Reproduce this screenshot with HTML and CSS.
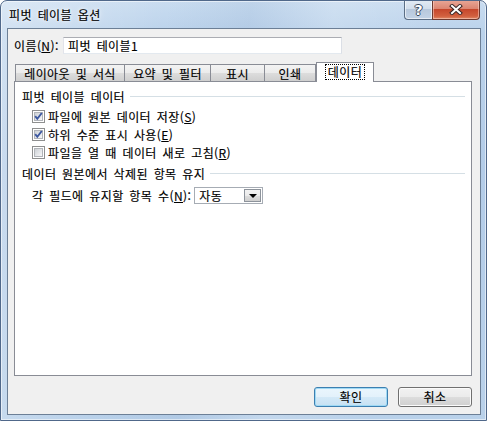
FILE: index.html
```html
<!DOCTYPE html>
<html lang="ko">
<head>
<meta charset="utf-8">
<title>피벗 테이블 옵션</title>
<link rel="stylesheet" href="styles.css">
</head>
<body>
<div class="window">
  <div class="titlebar">
    <span class="title">피벗 테이블 옵션</span>
    <div class="caps">
      <div class="cap help">?</div>
      <div class="cap close">
        <svg width="14" height="11" viewBox="0 0 14 11">
          <path d="M3 2 L11 9 M11 2 L3 9" stroke="#3a2626" stroke-width="4" stroke-linecap="square" fill="none"/>
          <path d="M3 2 L11 9 M11 2 L3 9" stroke="#ffffff" stroke-width="2" stroke-linecap="square" fill="none"/>
        </svg>
      </div>
    </div>
  </div>
  <div class="client">
    <div class="name-row">
      <span class="name-label">이름(<u>N</u>):</span>
      <div class="name-input">피벗 테이블1</div>
    </div>
    <div class="tabs">
      <div class="tab t1">레이아웃 및 서식</div>
      <div class="tab t2">요약 및 필터</div>
      <div class="tab t3">표시</div>
      <div class="tab t4">인쇄</div>
      <div class="tab active"><span class="focus">데이터</span></div>
    </div>
    <div class="panel">
      <div class="section">피벗 테이블 데이터</div>
      <div class="check first">
        <span class="cb"><span class="cb-in"></span><svg class="tick" width="11" height="11" viewBox="0 0 11 11"><path d="M2.2 5.2 L4.3 7.8 L8.8 2" stroke="#3d58a0" stroke-width="1.9" fill="none"/></svg></span>
        <span>파일에 원본 데이터 저장(<u>S</u>)</span>
      </div>
      <div class="check">
        <span class="cb"><span class="cb-in"></span><svg class="tick" width="11" height="11" viewBox="0 0 11 11"><path d="M2.2 5.2 L4.3 7.8 L8.8 2" stroke="#3d58a0" stroke-width="1.9" fill="none"/></svg></span>
        <span>하위 수준 표시 사용(<u>E</u>)</span>
      </div>
      <div class="check">
        <span class="cb"><span class="cb-in"></span></span>
        <span>파일을 열 때 데이터 새로 고침(<u>R</u>)</span>
      </div>
      <div class="section second">데이터 원본에서 삭제된 항목 유지</div>
      <div class="field-row">
        <span class="field-label">각 필드에 유지할 항목 수(<u>N</u>):</span>
        <div class="combo">
          <span class="combo-text">자동</span>
          <span class="combo-btn"><span class="arrow"></span></span>
        </div>
      </div>
    </div>
    <div class="buttons">
      <div class="btn default">확인</div>
      <div class="btn">취소</div>
    </div>
  </div>
</div>
</body>
</html>
```

FILE: styles.css
```css
html, body {
  margin: 0;
  padding: 0;
  background: #ffffff;
}

body {
  font-family: "Noto Sans CJK KR", "Noto Sans", sans-serif;
  font-size: 12px;
  color: #000;
  word-spacing: 2px;
  letter-spacing: 0.4px;
  -webkit-text-stroke: 0.15px #000;
}

u {
  text-decoration: underline;
  text-underline-offset: 1px;
}

.window {
  width: 487px;
  height: 421px;
  box-sizing: border-box;
  border: 1px solid #50688a;
  border-radius: 7px 7px 0 0;
  background:
    linear-gradient(100deg, rgba(255,255,255,0.35) 0%, rgba(255,255,255,0) 30%, rgba(120,150,190,0.12) 45%, rgba(255,255,255,0.15) 60%, rgba(255,255,255,0) 80%),
    linear-gradient(180deg, #c9dcf0 0%, #bad2eb 8%, #b3cce8 40%, #b9d1ea 100%);
  box-shadow: inset 0 0 0 1px rgba(255,255,255,0.55);
  display: flex;
  flex-direction: column;
  overflow: hidden;
}

.titlebar {
  height: 27px;
  flex: none;
  display: flex;
  justify-content: space-between;
  align-items: flex-start;
  padding-left: 8px;
}

.title {
  padding-top: 6px;
  line-height: 16px;
  font-size: 12px;
  text-shadow: 0 0 6px rgba(255,255,255,0.9), 0 0 3px rgba(255,255,255,0.9);
}

.caps {
  display: flex;
  margin-top: -1px;
  margin-right: 6px;
}

.cap {
  height: 20px;
  box-sizing: border-box;
  border: 1px solid #5b6e85;
  border-top: none;
  display: flex;
  align-items: center;
  justify-content: center;
}

.help {
  width: 28px;
  border-radius: 0 0 0 4px;
  border-right: none;
  background: linear-gradient(180deg, #e3ebf4 0%, #d2deec 45%, #b7c8dc 50%, #c3d3e6 100%);
  box-shadow: inset 0 0 0 1px rgba(255,255,255,0.6);
  color: #fff;
  font-family: "DejaVu Sans", sans-serif;
  font-weight: bold;
  font-size: 14px;
  line-height: 14px;
  letter-spacing: 0;
  -webkit-text-stroke: 0;
  text-shadow: -1px 0 #3a4a5e, 1px 0 #3a4a5e, 0 -1px #3a4a5e, 0 1px #3a4a5e;
}

.close {
  width: 48px;
  border-radius: 0 0 4px 0;
  border-color: #6e3a30;
  background: linear-gradient(180deg, #e9a898 0%, #dc8672 45%, #c6472c 50%, #d2603f 85%, #e08a68 100%);
  box-shadow: inset 0 0 0 1px rgba(255,220,210,0.5);
}

.client {
  flex: 1;
  margin: 0 5px 5px 6px;
  border: 1px solid #6c7f96;
  background: #f0f0f0;
  display: flex;
  flex-direction: column;
  padding: 8px 8px 0 6px;
}

.name-row {
  display: flex;
  align-items: center;
  height: 17px;
}

.name-label {
  width: 49px;
  flex: none;
}

.name-input {
  width: 279px;
  height: 17px;
  box-sizing: border-box;
  border: 1px solid #abadb3;
  border-color: #abadb3 #dbdfe6 #e3e9ef #e2e3ea;
  background: #fff;
  padding-left: 4px;
  line-height: 15px;
}

.tabs {
  margin-top: 8px;
  height: 19px;
  display: flex;
  align-items: flex-end;
  padding-left: 1px;
}

.tab {
  height: 17px;
  box-sizing: border-box;
  border: 1px solid #898c95;
  border-bottom: none;
  border-right: none;
  background: linear-gradient(180deg, #f3f3f3 0%, #ebebeb 50%, #dddddd 50%, #cfcfcf 100%);
  display: flex;
  align-items: center;
  justify-content: center;
  line-height: 15px;
}

.t1 { width: 109px; }
.t2 { width: 86px; }
.t3 { width: 54px; }
.t4 { width: 52px; border-right: 1px solid #898c95; }

.tab.active {
  width: 58px;
  height: 20px;
  margin-bottom: -1px;
  background: #fff;
  border-right: 1px solid #898c95;
  position: relative;
  z-index: 1;
  align-items: flex-start;
  padding-top: 2px;
}

.focus {
  outline: 1px dotted #000;
  outline-offset: 0;
  padding: 0 2px;
  line-height: 14px;
}

.panel {
  width: 458px;
  height: 295px;
  box-sizing: border-box;
  border: 1px solid #898c95;
  background: #fff;
  display: flex;
  flex-direction: column;
  padding: 6px 6px 0 7px;
}

.section {
  display: flex;
  align-items: center;
  height: 16px;
  gap: 5px;
}

.section::after {
  content: "";
  flex: 1;
  height: 1px;
  background: #d5dfe5;
}

.section.second {
  margin-top: 4px;
}

.check {
  display: flex;
  align-items: center;
  height: 18px;
  padding-left: 10px;
  gap: 3px;
}

.check.first {
  margin-top: 3px;
}

.cb {
  width: 13px;
  height: 13px;
  box-sizing: border-box;
  border: 1px solid #8e8f8f;
  background: #fff;
  display: grid;
  flex: none;
}

.cb-in {
  grid-area: 1 / 1;
  margin: 1px;
  box-sizing: border-box;
  border: 1px solid #b1b4b9;
  background: linear-gradient(135deg, #cdd1d6 0%, #e6e8eb 60%, #f8f8f8 100%);
}

.tick {
  grid-area: 1 / 1;
}

.field-row {
  margin-top: 6px;
  display: flex;
  align-items: center;
  height: 17px;
  padding-left: 10px;
  gap: 3px;
}

.field-label {
  min-width: 159px;
}

.combo {
  width: 69px;
  height: 17px;
  box-sizing: border-box;
  border: 1px solid #a6acb4;
  background: #fff;
  display: flex;
  align-items: center;
  justify-content: space-between;
  padding: 1px;
}

.combo-text {
  padding-left: 3px;
  line-height: 14px;
}

.combo-btn {
  width: 17px;
  height: 13px;
  box-sizing: border-box;
  border: 1px solid #8d939b;
  background: linear-gradient(180deg, #f2f2f2 0%, #ebebeb 50%, #dddddd 50%, #cfcfcf 100%);
  display: flex;
  align-items: center;
  justify-content: center;
}

.arrow {
  width: 0;
  height: 0;
  border-left: 4px solid transparent;
  border-right: 4px solid transparent;
  border-top: 4px solid #000;
  margin-top: 1px;
}

.buttons {
  margin-top: 11px;
  display: flex;
  justify-content: flex-end;
  gap: 10px;
}

.btn {
  width: 74px;
  height: 20px;
  box-sizing: border-box;
  border: 1px solid #707070;
  border-radius: 3px;
  background: linear-gradient(180deg, #f2f2f2 0%, #ebebeb 50%, #dddddd 50%, #cfcfcf 100%);
  box-shadow: inset 0 0 0 1px #fbfbfb;
  display: flex;
  align-items: center;
  justify-content: center;
  line-height: 16px;
}

.btn.default {
  border-color: #3c7fb1;
  box-shadow: inset 0 0 0 1px #9fd9f4;
  background: linear-gradient(180deg, #eaf6fd 0%, #e3f1fb 50%, #d4e9f7 50%, #c6e1f3 100%);
}
```
